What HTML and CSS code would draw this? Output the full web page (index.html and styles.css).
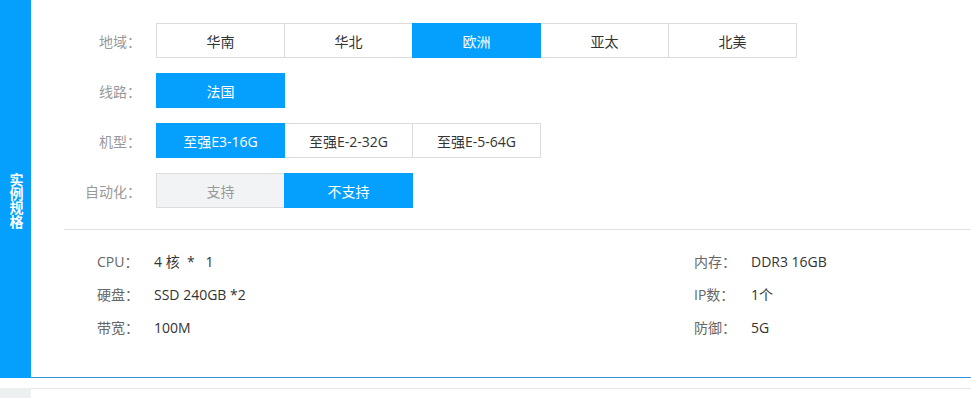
FILE: index.html
```html
<!DOCTYPE html>
<html lang="zh-CN">
  <head>
    <meta charset="UTF-8" />
    <meta name="viewport" content="width=device-width, initial-scale=1.0" />
    <title>实例规格</title>
    <link rel="stylesheet" href="styles.css">
  </head>
  <body>
    <div class="spec-panel">
      <div class="panel-side"><span>实例规格</span></div>
      <div class="panel-body">
        <div class="options">
          <div class="opt-row">
            <span class="opt-label">地域：</span>
            <div class="btn-group">
              <button class="opt-btn">华南</button>
              <button class="opt-btn">华北</button>
              <button class="opt-btn active">欧洲</button>
              <button class="opt-btn">亚太</button>
              <button class="opt-btn">北美</button>
            </div>
          </div>
          <div class="opt-row">
            <span class="opt-label">线路：</span>
            <div class="btn-group">
              <button class="opt-btn active">法国</button>
            </div>
          </div>
          <div class="opt-row">
            <span class="opt-label">机型：</span>
            <div class="btn-group">
              <button class="opt-btn active">至强E3-16G</button>
              <button class="opt-btn">至强E-2-32G</button>
              <button class="opt-btn">至强E-5-64G</button>
            </div>
          </div>
          <div class="opt-row">
            <span class="opt-label">自动化：</span>
            <div class="btn-group">
              <button class="opt-btn disabled">支持</button>
              <button class="opt-btn active">不支持</button>
            </div>
          </div>
        </div>

        <div class="summary">
          <div class="item"><span class="key">CPU：</span><span class="val">4 核 &nbsp;* &nbsp; 1</span></div>
          <div class="item"><span class="key">内存：</span><span class="val">DDR3 16GB</span></div>
          <div class="item"><span class="key">硬盘：</span><span class="val">SSD 240GB *2</span></div>
          <div class="item"><span class="key">IP数：</span><span class="val">1个</span></div>
          <div class="item"><span class="key">带宽：</span><span class="val">100M</span></div>
          <div class="item"><span class="key">防御：</span><span class="val">5G</span></div>
        </div>
      </div>
    </div>

    <div class="spec-panel next">
      <div class="panel-side"></div>
      <div class="panel-body"></div>
    </div>
  </body>
</html>
```

FILE: styles.css
```css
body {
  margin: 0;
  padding: 0;
  background-color: #ffffff;
  font-family: "Open Sans", "Noto Sans CJK SC", sans-serif;
  font-size: 14px;
  color: #333;
}
.spec-panel {
  display: flex;
}
.panel-side {
  width: 31px;
  flex-shrink: 0;
  background-color: #05a0fe;
  color: #fff;
  display: flex;
  align-items: center;
  justify-content: center;
  padding-top: 24px;
  box-sizing: border-box;
}
.panel-side span {
  writing-mode: vertical-rl;
  font-size: 14px;
  font-weight: bold;
  line-height: 14px;
}
.panel-body {
  flex: 1;
  padding-top: 23px;
  border-bottom: 1px solid #2f93dd;
}
.options {
  margin-left: 33px;
  padding-bottom: 21px;
  border-bottom: 1px solid #e2e2e2;
  display: flex;
  flex-direction: column;
  gap: 15px;
}
.opt-row {
  display: flex;
  align-items: center;
}
.opt-label {
  width: 77px;
  margin-right: 15px;
  text-align: right;
  color: #999;
}
.btn-group {
  display: flex;
}
.opt-btn {
  width: 129px;
  height: 35px;
  box-sizing: border-box;
  border: 1px solid #dcdcdc;
  background-color: #fff;
  color: #333;
  font-family: inherit;
  font-size: 14px;
  padding: 0;
  cursor: pointer;
}
.opt-btn + .opt-btn {
  margin-left: -1px;
}
.opt-btn.active {
  background-color: #05a0fe;
  border-color: #05a0fe;
  color: #fff;
  position: relative;
}
.opt-btn.disabled {
  background-color: #f2f3f5;
  color: #999;
}
.summary {
  display: grid;
  grid-template-columns: 597px auto;
  padding: 15px 0 33px 66px;
  line-height: 33px;
}
.key {
  display: inline-block;
  width: 57px;
  color: #666;
}
.val {
  color: #333;
}
.spec-panel.next {
  margin-top: 10px;
}
.spec-panel.next .panel-side {
  background-color: #edf0f0;
  height: 10px;
  padding: 0;
}
.spec-panel.next .panel-body {
  padding: 0;
  border-bottom: none;
  border-top: 1px solid #e8e8e8;
}
```
